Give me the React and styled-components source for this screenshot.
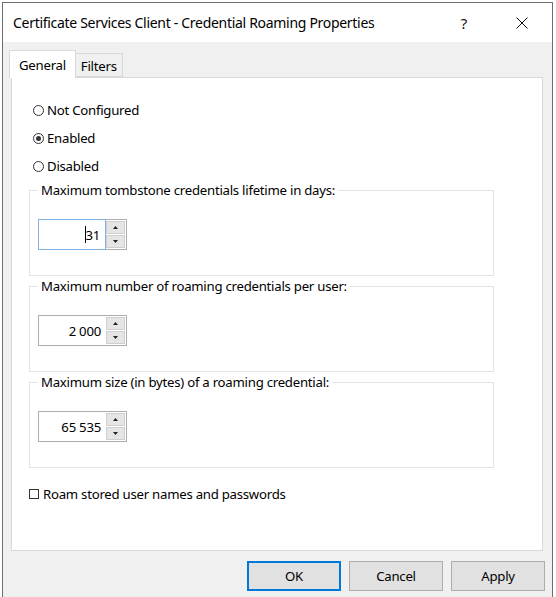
import styled, { createGlobalStyle } from 'styled-components';

const GlobalStyle = createGlobalStyle`
  html, body {
    margin: 0;
    padding: 0;
    background: #ffffff;
    overflow: hidden;
  }
  body {
    font-family: "Noto Sans", "Open Sans", sans-serif;
    color: #000;
  }
`;

const Window = styled.div`
  margin: 2px 0 0 2px;
  width: 549px;
  height: 620px;
  border: 1px solid #6e6e6e;
  background: #f0f0f0;
  display: flex;
  flex-direction: column;
`;

const TitleBar = styled.div`
  height: 39px;
  background: #ffffff;
  display: flex;
  align-items: center;
  padding: 0 7px 0 10px;
  font-size: 14px;
`;

const Title = styled.div`
  flex: 1;
  letter-spacing: -0.3px;
`;

const TitleButton = styled.div`
  width: 46px;
  height: 39px;
  display: flex;
  align-items: center;
  justify-content: center;
  font-size: 15px;
  color: #111;
  margin-left: ${({ gap }) => gap || 0}px;
`;

const Body = styled.div`
  padding: 8px 9px 0 7px;
  display: flex;
  flex-direction: column;
`;

const TabStrip = styled.div`
  display: flex;
  align-items: flex-end;
  height: 27px;
  position: relative;
  z-index: 1;
`;

const Tab = styled.div`
  height: ${({ active }) => (active ? 28 : 24)}px;
  margin-bottom: ${({ active }) => (active ? -1 : 0)}px;
  padding: 0 ${({ active }) => (active ? 9 : 5)}px;
  margin-left: -1px;
  box-sizing: border-box;
  border: 1px solid #d9d9d9;
  border-bottom: ${({ active }) => (active ? 'none' : '1px solid #d9d9d9')};
  background: ${({ active }) => (active ? '#ffffff' : '#f0f0f0')};
  font-size: 13.2px;
  display: flex;
  align-items: center;
  padding-top: ${({ active }) => (active ? 0 : 2)}px;
  letter-spacing: -0.25px;
`;

const Panel = styled.div`
  height: 474px;
  box-sizing: border-box;
  margin-left: 1px;
  border: 1px solid #d9d9d9;
  background: #ffffff;
  padding: 22px 48px 0 17px;
  display: flex;
  flex-direction: column;
`;

const RadioGroup = styled.div`
  display: flex;
  flex-direction: column;
  gap: 8px;
  padding-left: 4px;
`;

const OptionRow = styled.label`
  display: flex;
  align-items: center;
  height: 20px;
  font-size: 13.2px;
  letter-spacing: -0.25px;
`;

const RadioMark = styled.span`
  width: 9px;
  height: 9px;
  border: 1px solid #333;
  border-radius: 50%;
  margin-right: 3px;
  display: flex;
  align-items: center;
  justify-content: center;
  flex-shrink: 0;

  &::after {
    content: '';
    display: ${({ checked }) => (checked ? 'block' : 'none')};
    width: 5px;
    height: 5px;
    border-radius: 50%;
    background: #333;
  }
`;

const CheckMark = styled.span`
  width: 8px;
  height: 8px;
  border: 1px solid #333;
  margin-right: 4px;
  flex-shrink: 0;
`;

const Groups = styled.div`
  display: flex;
  flex-direction: column;
  gap: 10px;
  margin-top: 14px;
`;

const GroupBox = styled.fieldset`
  margin: 0;
  height: 86px;
  box-sizing: border-box;
  border: 1px solid #e3e3e3;
  padding: 28px 8px 0 8px;
  position: relative;
`;

const Legend = styled.div`
  position: absolute;
  top: -11px;
  left: 8px;
  background: #ffffff;
  padding: 0 3px;
  font-size: 13.2px;
  letter-spacing: -0.25px;
  line-height: 20px;
`;

const Spin = styled.div`
  display: flex;
  width: 89px;
  height: 31px;
`;

const SpinField = styled.div`
  flex: 1;
  box-sizing: border-box;
  border: 1px solid ${({ focused }) => (focused ? '#7eb4ea' : '#adadad')};
  border-right: ${({ focused }) => (focused ? '1px solid #7eb4ea' : 'none')};
  display: flex;
  align-items: center;
  justify-content: flex-end;
  padding-right: 5px;
  font-size: 13.2px;
  letter-spacing: -0.25px;
`;

const Caret = styled.span`
  display: inline-block;
  width: 1px;
  height: 17px;
  background: #000;
  margin-right: -1px;
`;

const SpinButtons = styled.div`
  width: 21px;
  box-sizing: border-box;
  border: 1px solid #adadad;
  border-left: none;
  background: #ffffff;
  display: flex;
  flex-direction: column;
  padding: 1px 1px 1px 0;
  gap: 1px;
`;

const SpinButton = styled.div`
  flex: 1;
  background: #e5e5e5;
  border: 1px solid #cfcfcf;
  display: flex;
  align-items: center;
  justify-content: center;
`;

const CheckRow = styled(OptionRow)`
  margin-top: 16px;
`;

const Footer = styled.div`
  display: flex;
  justify-content: flex-end;
  gap: 8px;
  padding: 10px 0 0 0;
  margin-right: -2px;
`;

const Button = styled.button`
  width: 94px;
  height: 30px;
  box-sizing: border-box;
  background: #e1e1e1;
  border: 1px solid ${({ primary }) => (primary ? '#0078d7' : '#adadad')};
  box-shadow: ${({ primary }) => (primary ? 'inset 0 0 0 1px #0078d7' : 'none')};
  font-family: inherit;
  font-size: 13.2px;
  letter-spacing: -0.25px;
  color: #000;
  padding: 0;
`;

const Arrow = ({ down }) => (
  <svg width="5" height="3" viewBox="0 0 5 3">
    <path d={down ? 'M0 0 H5 L2.5 3 Z' : 'M0 3 H5 L2.5 0 Z'} fill="#222" />
  </svg>
);

const CloseIcon = () => (
  <svg width="12" height="12" viewBox="0 0 12 12">
    <path d="M0.5 0.5 L11.5 11.5 M11.5 0.5 L0.5 11.5" stroke="#111" strokeWidth="1" />
  </svg>
);

const SpinBox = ({ value, focused }) => (
  <Spin>
    <SpinField focused={focused}>
      {focused && <Caret />}
      {value}
    </SpinField>
    <SpinButtons>
      <SpinButton><Arrow /></SpinButton>
      <SpinButton><Arrow down /></SpinButton>
    </SpinButtons>
  </Spin>
);

const groups = [
  { label: 'Maximum tombstone credentials lifetime in days:', value: '31', focused: true },
  { label: 'Maximum number of roaming credentials per user:', value: '2 000' },
  { label: 'Maximum size (in bytes) of a roaming credential:', value: '65 535' },
];

export default function App() {
  return (
    <>
      <GlobalStyle />
      <Window>
        <TitleBar>
          <Title>Certificate Services Client - Credential Roaming Properties</Title>
          <TitleButton>?</TitleButton>
          <TitleButton gap={12}><CloseIcon /></TitleButton>
        </TitleBar>
        <Body>
          <TabStrip>
            <Tab active>General</Tab>
            <Tab>Filters</Tab>
          </TabStrip>
          <Panel>
            <RadioGroup>
              <OptionRow><RadioMark />Not Configured</OptionRow>
              <OptionRow><RadioMark checked />Enabled</OptionRow>
              <OptionRow><RadioMark />Disabled</OptionRow>
            </RadioGroup>
            <Groups>
              {groups.map((g) => (
                <GroupBox key={g.label}>
                  <Legend>{g.label}</Legend>
                  <SpinBox value={g.value} focused={g.focused} />
                </GroupBox>
              ))}
            </Groups>
            <CheckRow><CheckMark />Roam stored user names and passwords</CheckRow>
          </Panel>
          <Footer>
            <Button primary>OK</Button>
            <Button>Cancel</Button>
            <Button>Apply</Button>
          </Footer>
        </Body>
      </Window>
    </>
  );
}
